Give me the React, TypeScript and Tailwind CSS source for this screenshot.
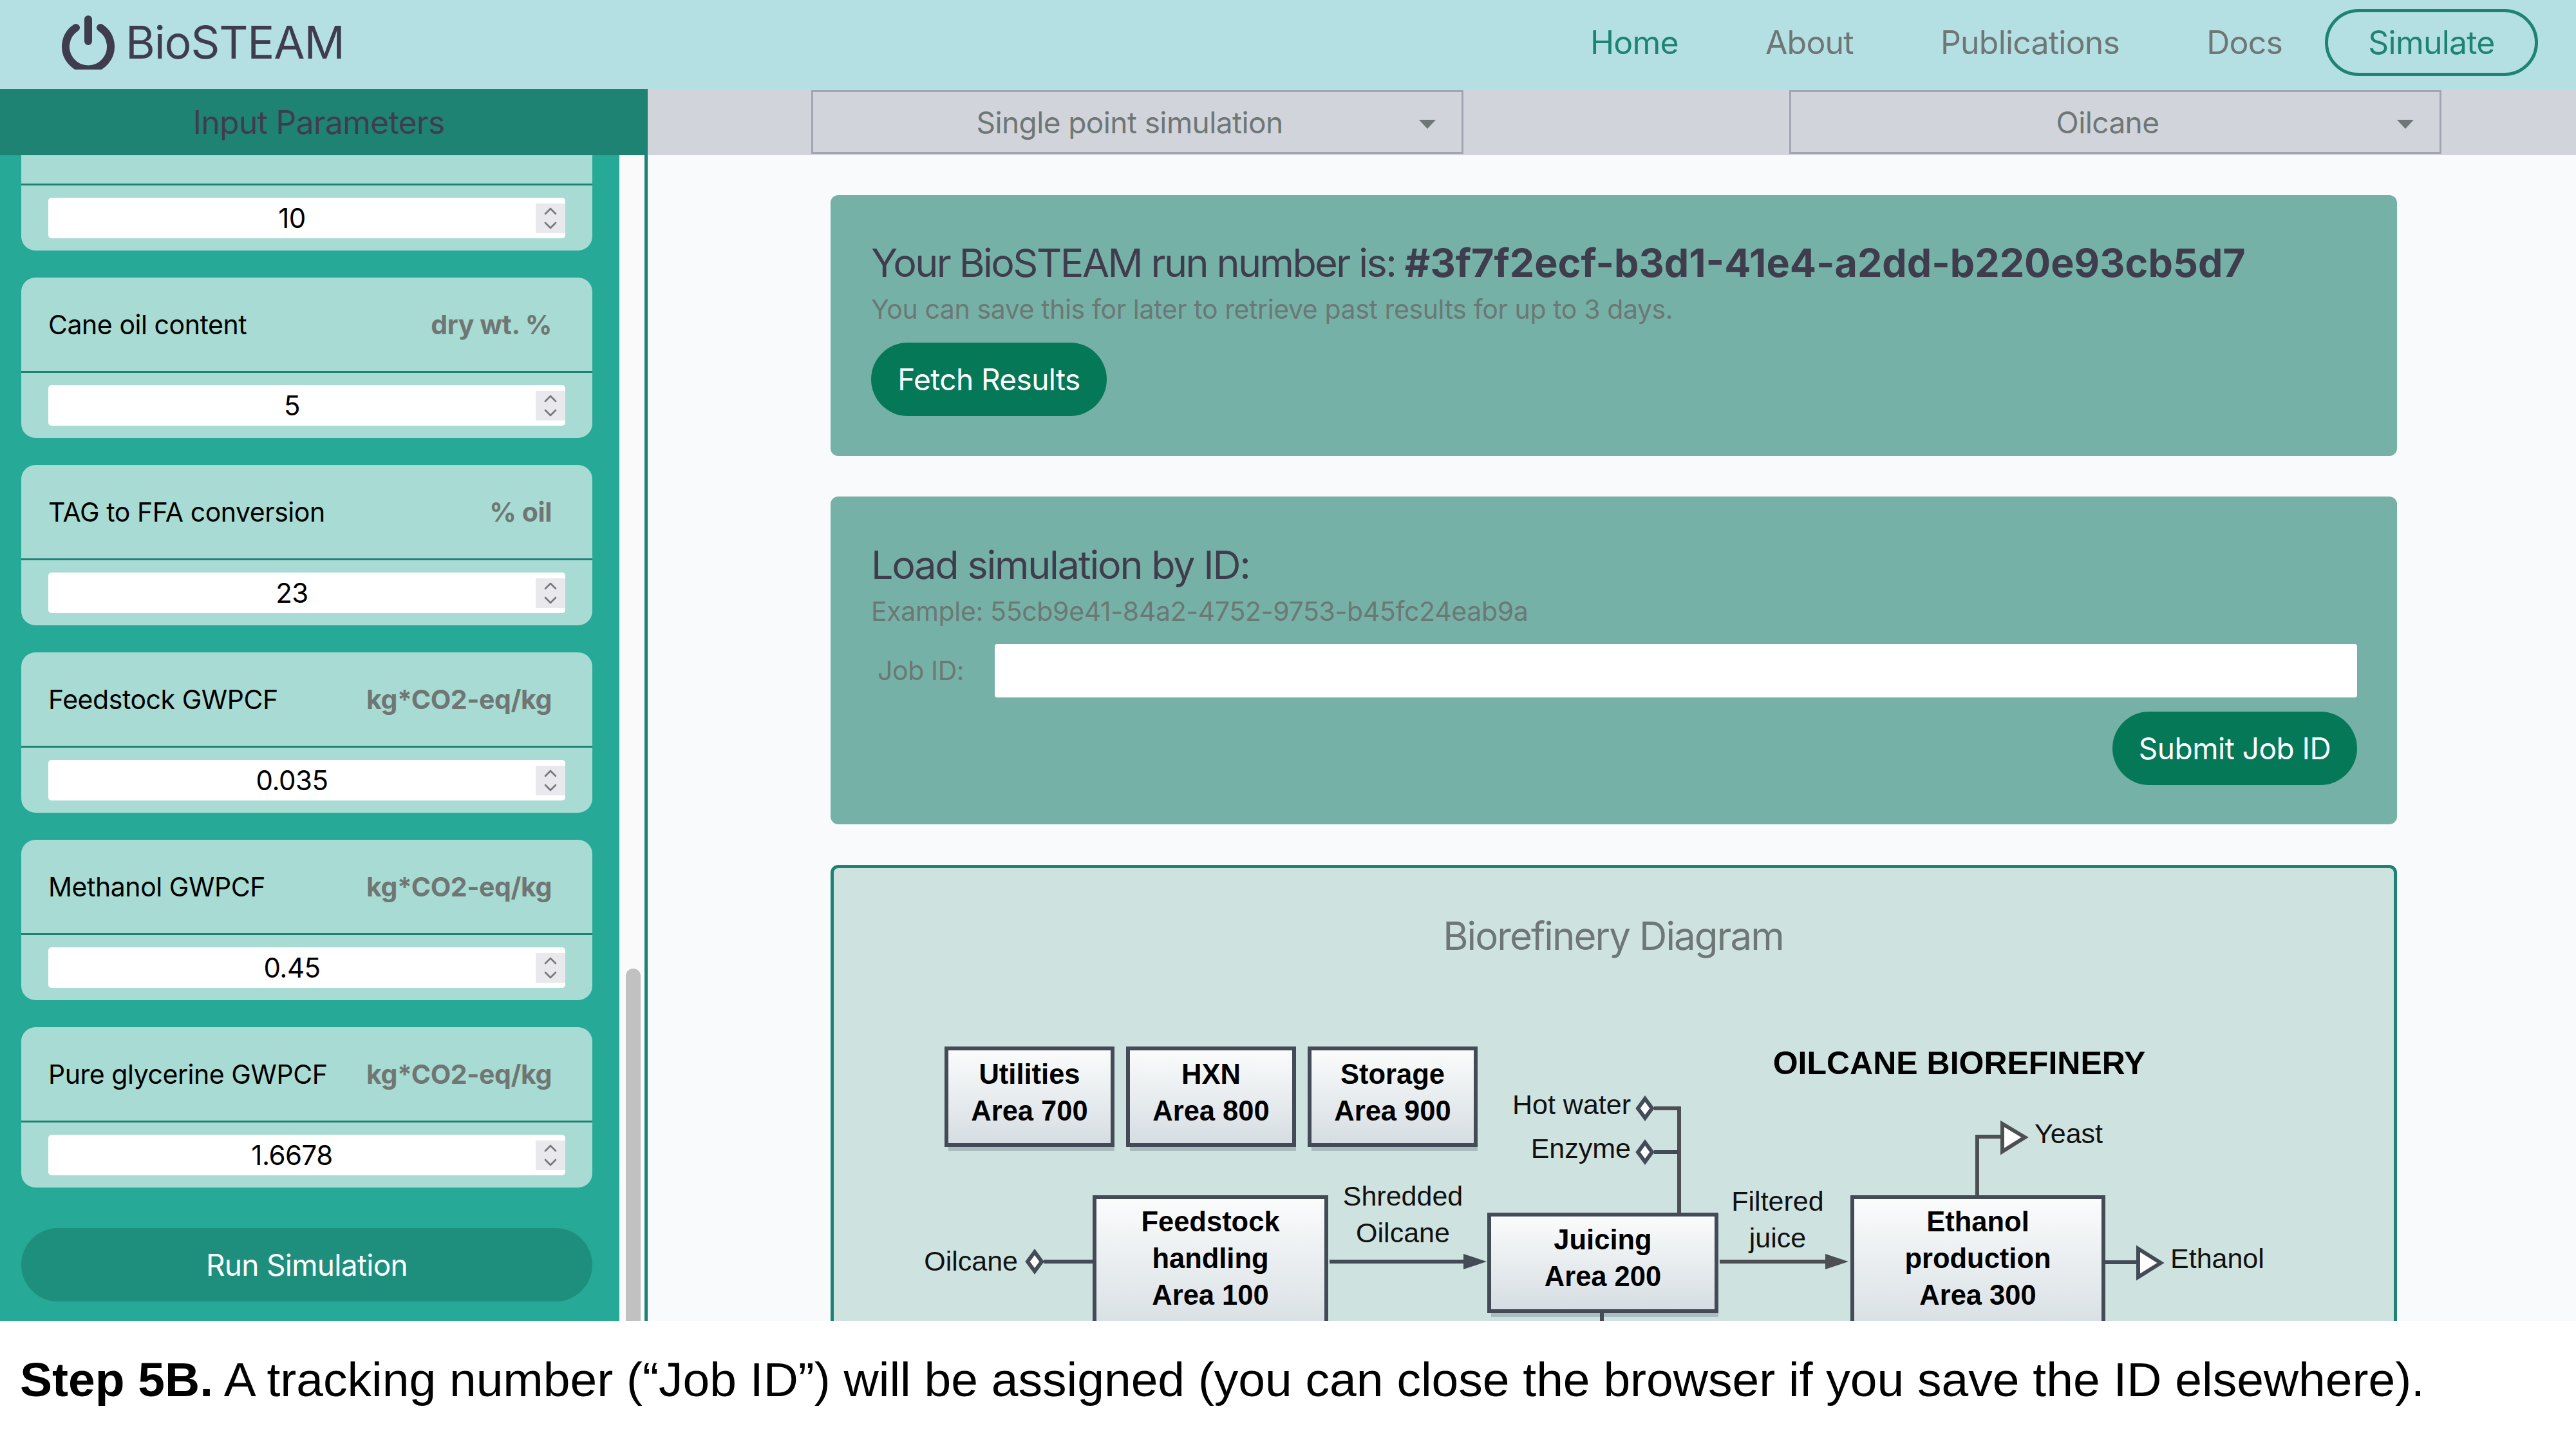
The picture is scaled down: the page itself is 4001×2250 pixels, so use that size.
import React from "react";

const params = [
  { label: "Cane oil content", unit: "dry wt. %", value: "5" },
  { label: "TAG to FFA conversion", unit: "% oil", value: "23" },
  { label: "Feedstock GWPCF", unit: "kg*CO2-eq/kg", value: "0.035" },
  { label: "Methanol GWPCF", unit: "kg*CO2-eq/kg", value: "0.45" },
  { label: "Pure glycerine GWPCF", unit: "kg*CO2-eq/kg", value: "1.6678" },
];

function NumberInput({ value }: { value: string }) {
  return (
    <div className="flex h-[63px] items-center rounded-[5px] bg-white text-[42px] leading-none tracking-[-0.5px] text-black">
      <div className="flex-1 text-center">{value}</div>
      <div className="flex h-[46px] w-[46px] items-center justify-center bg-[#e9e9ed]">
        <svg width="22" height="36" viewBox="0 0 22 36" fill="none" stroke="#77777c" strokeWidth="2.6" strokeLinecap="round" strokeLinejoin="round">
          <path d="M3 11 L11 3 L19 11" />
          <path d="M3 25 L11 33 L19 25" />
        </svg>
      </div>
    </div>
  );
}

function Box({ x, y, w, h, lines, dy = 57, first }: { x: number; y: number; w: number; h: number; lines: string[]; dy?: number; first: number }) {
  return (
    <g>
      <rect x={x + 3} y={y + 9} width={w} height={h} fill="#3f4a57" opacity="0.25" />
      <rect x={x} y={y} width={w} height={h} fill="url(#boxGrad)" stroke="#434b57" strokeWidth="6" />
      {lines.map((l, i) => (
        <text key={l} x={x + w / 2} y={first + i * dy} textAnchor="middle" fontWeight="700" fontSize="43.5" fill="#000" fontFamily="'Liberation Sans', sans-serif">
          {l}
        </text>
      ))}
    </g>
  );
}

function Diamond({ x, y }: { x: number; y: number }) {
  return <path d={`M${x} ${y - 15} L${x + 11} ${y} L${x} ${y + 15} L${x - 11} ${y} Z`} fill="#fff" stroke="#434b57" strokeWidth="6" />;
}

function Label({ x, y, children, anchor = "middle" }: { x: number; y: number; children: string; anchor?: "start" | "middle" | "end" }) {
  return (
    <text x={x} y={y} textAnchor={anchor} fontSize="43" fill="#111" fontFamily="'Liberation Sans', sans-serif">
      {children}
    </text>
  );
}

function Diagram() {
  // viewBox matches the panel's inner canvas, origin at page (1296, 1580)
  return (
    <svg className="absolute left-0 top-[232px]" width="2420" height="560" viewBox="1296 1580 2420 560">
      <defs>
        <linearGradient id="boxGrad" x1="0" y1="0" x2="0" y2="1">
          <stop offset="0" stopColor="#fbfcfc" />
          <stop offset="1" stopColor="#d5dde2" />
        </linearGradient>
      </defs>
      <Box x={1471} y={1628} w={258} h={150} lines={["Utilities", "Area 700"]} first={1683} />
      <Box x={1753} y={1628} w={258} h={150} lines={["HXN", "Area 800"]} first={1683} />
      <Box x={2035} y={1628} w={258} h={150} lines={["Storage", "Area 900"]} first={1683} />
      <Box x={1701} y={1859} w={360} h={220} lines={["Feedstock", "handling", "Area 100"]} first={1912} />
      <Box x={2314} y={1886} w={353} h={150} lines={["Juicing", "Area 200"]} first={1940} />
      <Box x={2878} y={1859} w={390} h={220} lines={["Ethanol", "production", "Area 300"]} first={1912} />

      <g fill="none" stroke="#434b57" strokeWidth="6">
        <path d="M1622 1959 H1698" />
        <path d="M2066 1959 H2276" />
        <path d="M2570 1721 H2609 V1883" stroke="#4d4f52" />
        <path d="M2570 1789 H2607" />
        <path d="M2672 1959 H2838" stroke="#4d4f52" />
        <path d="M3072 1856 V1765 H3109" stroke="#4d4f52" />
        <path d="M3271 1960 H3321" />
        <path d="M2489 2037 V2060" />
      </g>
      <path d="M2274 1947 L2310 1959 L2274 1971 Z" fill="#434b57" />
      <path d="M2836 1947 L2872 1959 L2836 1971 Z" fill="#4d4f52" />
      <Diamond x={1608} y={1959} />
      <Diamond x={2556} y={1721} />
      <Diamond x={2556} y={1789} />
      <path d="M3111 1745 L3146 1766 L3111 1788 Z" fill="#fff" stroke="#4d4f52" strokeWidth="6" />
      <path d="M3322 1939 L3357 1961 L3322 1983 Z" fill="#fff" stroke="#434b57" strokeWidth="6" />

      <Label x={1582} y={1973} anchor="end">Oilcane</Label>
      <Label x={2534} y={1730} anchor="end">Hot water</Label>
      <Label x={2534} y={1798} anchor="end">Enzyme</Label>
      <Label x={2180} y={1872}>Shredded</Label>
      <Label x={2180} y={1929}>Oilcane</Label>
      <Label x={2762} y={1880}>Filtered</Label>
      <Label x={2762} y={1937}>juice</Label>
      <Label x={3161} y={1775} anchor="start">Yeast</Label>
      <Label x={3372} y={1969} anchor="start">Ethanol</Label>
      <text x={3044} y={1668} textAnchor="middle" fontWeight="700" fontSize="50" fill="#000" fontFamily="'Liberation Sans', sans-serif">
        OILCANE BIOREFINERY
      </text>
    </svg>
  );
}

export default function App() {
  return (
    <div className="h-[2250px] w-[4001px] bg-white font-['Inter',sans-serif]">
      <div className="flex h-[2051px] flex-col overflow-hidden">
        {/* Navbar */}
        <header className="flex h-[138px] shrink-0 items-center bg-[#b4e0e4] pb-[7px] pl-[95px] pr-[59px]">
          <svg width="84" height="84" viewBox="0 0 84 84" fill="none" stroke="#3f3d4d" strokeWidth="12" strokeLinecap="round">
            <path d="M42 6 V40" />
            <path d="M23 19 A35 35 0 1 0 61 19" />
          </svg>
          <span className="ml-[16px] text-[70px] leading-none tracking-[-1.1px] text-[#3f3d4d]">BioSTEAM</span>
          <nav className="ml-auto flex items-center text-[50px] leading-none tracking-[-0.8px] text-[#6f7676]">
            <a className="text-[#1f8373]">Home</a>
            <a className="ml-[135px]">About</a>
            <a className="ml-[135px]">Publications</a>
            <a className="ml-[135px]">Docs</a>
            <a className="ml-[66px] flex h-[104px] w-[331px] items-center justify-center rounded-[52px] border-[5px] border-[#1f8373] text-[#1f8373]">Simulate</a>
          </nav>
        </header>

        <div className="flex min-h-0 flex-1">
          {/* Sidebar */}
          <aside className="flex w-[1006px] shrink-0 flex-col">
            <div className="flex h-[103px] shrink-0 items-center justify-center bg-[#1f8373] pr-[16px] pt-[1px] text-[50px] leading-none tracking-[-0.8px] text-[#3f3d4d]">
              Input Parameters
            </div>
            <div className="flex min-h-0 flex-1 border-r-[5px] border-[#1f8373] bg-[#fafafa]">
              <div className="flex h-full w-[962px] shrink-0 flex-col bg-[#26a996] px-[33px] pr-[42px]">
                <div className="rounded-b-[22px] bg-[#a7dbd3]">
                  <div className="h-[47px] border-b-[3px] border-[#1f8373]" />
                  <div className="px-[42px] py-[19px]">
                    <NumberInput value="10" />
                  </div>
                </div>
                {params.map((p) => (
                  <div key={p.label} className="mt-[42px] rounded-[22px] bg-[#a7dbd3]">
                    <div className="flex h-[148px] items-center justify-between border-b-[3px] border-[#1f8373] pl-[42px] pr-[63px] pt-[2px] text-[41px] leading-none">
                      <span className="tracking-[-0.45px] text-black">{p.label}</span>
                      <span className="font-bold tracking-[-0.4px] text-[#6f7674]">{p.unit}</span>
                    </div>
                    <div className="px-[42px] py-[19px]">
                      <NumberInput value={p.value} />
                    </div>
                  </div>
                ))}
                <button className="mt-[63px] h-[114px] shrink-0 rounded-[57px] bg-[#1f8f7d] text-[46px] tracking-[-0.7px] text-white">Run Simulation</button>
              </div>
              <div className="ml-[10px] mt-[1263px] h-[600px] w-[23px] shrink-0 rounded-full bg-[#c1c1c1]" />
            </div>
          </aside>

          {/* Main */}
          <main className="flex min-w-0 flex-1 flex-col bg-[#f9fafb]">
            <div className="flex h-[103px] shrink-0 items-center bg-[#d1d5db] pl-[254px] text-[46px] leading-none tracking-[-0.6px] text-[#6f7676]">
              {["Single point simulation", "Oilcane"].map((t, i) => (
                <div key={t} className={`relative flex h-[99px] w-[1013px] shrink-0 items-center justify-center border-[3px] border-[#a1a5b1] pr-[24px] ${i === 1 ? "ml-[506px]" : ""}`}>
                  {t}
                  <span className="absolute right-[40px] top-[43px] h-0 w-0 border-x-[13px] border-t-[14px] border-x-transparent border-t-[#6f7676]" />
                </div>
              ))}
            </div>
            <div className="flex flex-col gap-[63px] pl-[284px] pr-[278px] pt-[62px]">
              <section className="h-[405px] rounded-[12px] bg-[#76b1a8] pl-[63px] pr-[62px] pt-[68px]">
                <p className="text-[61px] leading-[74px] tracking-[-2.55px] text-[#3f3d4d]">
                  Your BioSTEAM run number is: <span className="font-bold tracking-normal">#3f7f2ecf-b3d1-41e4-a2dd-b220e93cb5d7</span>
                </p>
                <p className="mt-[4px] text-[41px] leading-[62px] tracking-[-0.4px] text-[#6b7874]">You can save this for later to retrieve past results for up to 3 days.</p>
                <button className="mt-[21px] flex h-[114px] w-[366px] items-center justify-center rounded-[57px] bg-[#057857] text-[46px] tracking-[-0.6px] text-white">Fetch Results</button>
              </section>
              <section className="h-[509px] rounded-[12px] bg-[#76b1a8] pl-[63px] pr-[62px] pt-[69px]">
                <p className="text-[61px] leading-[74px] tracking-[-2.2px] text-[#3f3d4d]">Load simulation by ID:</p>
                <p className="mt-[4px] text-[41px] leading-[62px] tracking-[-0.35px] text-[#6b7874]">Example: 55cb9e41-84a2-4752-9753-b45fc24eab9a</p>
                <div className="mt-[20px] flex h-[83px] items-center">
                  <span className="w-[192px] pl-[10px] text-[41px] tracking-[-0.4px] text-[#6b7874]">Job ID:</span>
                  <div className="h-full flex-1 rounded-[4px] bg-white" />
                </div>
                <div className="mt-[22px] flex justify-end">
                  <button className="h-[114px] w-[380px] rounded-[57px] bg-[#057857] text-[46px] tracking-[-0.5px] text-white">Submit Job ID</button>
                </div>
              </section>
              <section className="relative h-[800px] shrink-0 rounded-[12px] border-[5px] border-[#1f8373] bg-[#cee2e0]">
                <h2 className="pr-[2px] pt-[68px] text-center text-[60px] leading-[74px] tracking-[-1.9px] text-[#6f7676]">Biorefinery Diagram</h2>
                <Diagram />
              </section>
            </div>
          </main>
        </div>
      </div>
      <p className="whitespace-nowrap pl-[31px] pt-[62px] font-['Liberation_Sans',sans-serif] text-[75px] leading-[58px] text-black">
        <b>Step 5B.</b> A tracking number (“Job ID”) will be assigned (you can close the browser if you save the ID elsewhere).
      </p>
    </div>
  );
}
